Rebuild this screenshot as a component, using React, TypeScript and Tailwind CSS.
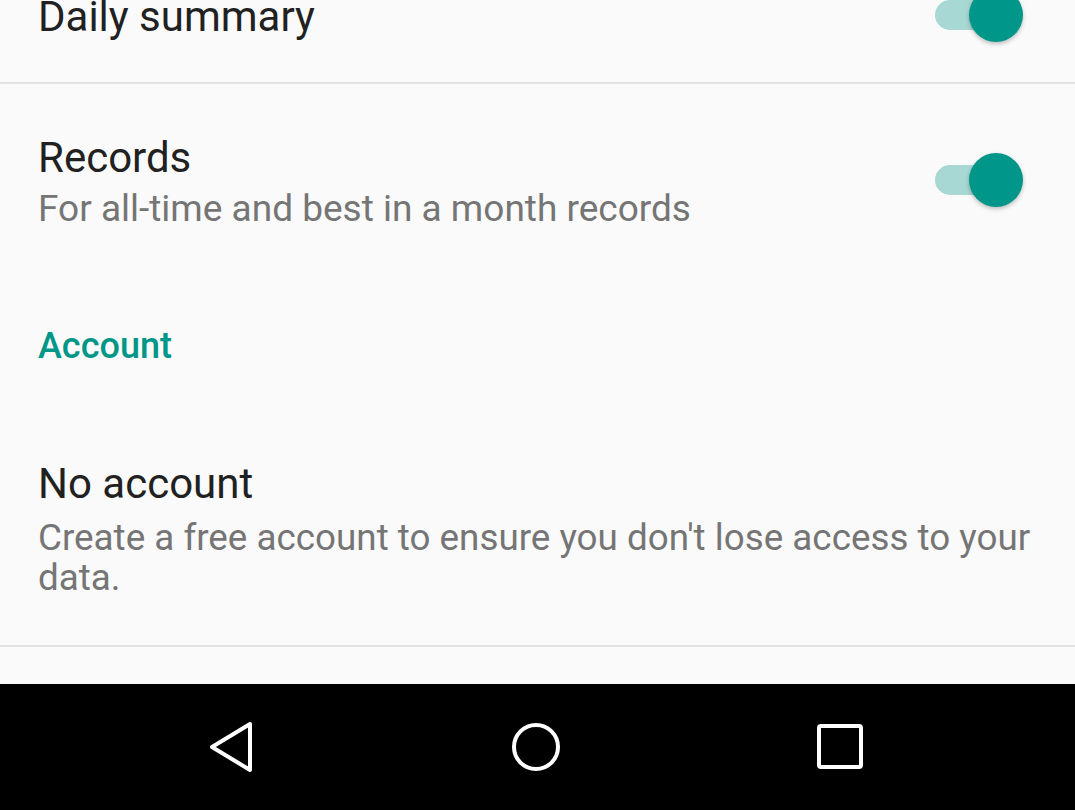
import React from "react";

function Toggle() {
  return (
    <div className="relative h-[54px] w-[88px] shrink-0">
      <div className="absolute left-0 top-[12px] h-[30px] w-[74px] rounded-full bg-[#a8d8d3]" />
      <div className="absolute right-0 top-0 h-[54px] w-[54px] rounded-full bg-[#00968a] shadow-[0_2px_4px_rgba(0,0,0,0.25)]" />
    </div>
  );
}

export default function App() {
  return (
    <div
      className="flex h-[810px] w-[1075px] flex-col overflow-hidden bg-[#fafafa]"
      style={{ fontFamily: "Roboto, 'Liberation Sans', sans-serif" }}
    >
      <div className="flex-1 overflow-hidden">
        {/* Daily summary */}
        <div className="-mt-[8px] flex items-center justify-between border-b-2 border-[#e2e2e2] pb-[40px] pl-[38px] pr-[52px]">
          <div className="text-[42px] leading-[48px] text-[#212121]">Daily summary</div>
          <div className="-mt-[4px]">
            <Toggle />
          </div>
        </div>

        {/* Records */}
        <div className="flex items-center justify-between pl-[38px] pr-[52px] pt-[50px]">
          <div>
            <div className="text-[42px] leading-[48px] text-[#212121]">Records</div>
            <div className="mt-[6px] text-[37px] leading-[42px] text-[#757575]">
              For all-time and best in a month records
            </div>
          </div>
          <div className="-mt-[4px]">
            <Toggle />
          </div>
        </div>

        {/* Account header */}
        <div className="mt-[96px] pl-[38px] text-[36px] font-medium leading-[40px] text-[#009688]">
          Account
        </div>

        {/* No account */}
        <div className="mt-[94px] border-b-2 border-[#e2e2e2] pb-[47px] pl-[38px] pr-[20px]">
          <div className="text-[42px] leading-[48px] text-[#212121]">No account</div>
          <div className="mt-[10px] text-[36.8px] leading-[40px] text-[#757575]">
            Create a free account to ensure you don't lose access to your data.
          </div>
        </div>
      </div>

      {/* Navigation bar */}
      <div className="flex h-[126px] shrink-0 items-center bg-black">
        <div className="flex w-full items-center">
          <div className="ml-[206px]">
            <svg width="50" height="54" viewBox="0 0 50 54">
              <path
                d="M44 4 L6 27 L44 50 Z"
                fill="none"
                stroke="white"
                strokeWidth="4"
                strokeLinejoin="round"
              />
            </svg>
          </div>
          <div className="ml-[253px]">
            <svg width="54" height="54" viewBox="0 0 54 54">
              <circle cx="27" cy="27" r="22" fill="none" stroke="white" strokeWidth="4" />
            </svg>
          </div>
          <div className="ml-[254px]">
            <svg width="46" height="46" viewBox="0 0 46 46">
              <rect x="2" y="2" width="42" height="41" rx="2" fill="none" stroke="white" strokeWidth="4" />
            </svg>
          </div>
        </div>
      </div>
    </div>
  );
}
